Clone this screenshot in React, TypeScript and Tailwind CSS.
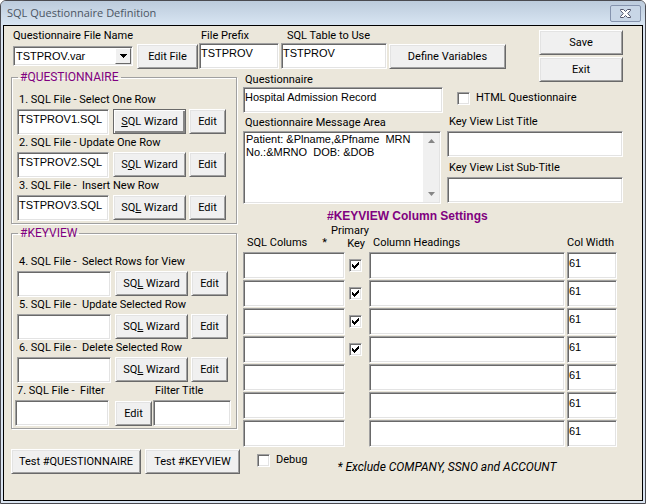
import { useState } from 'react';
import type { ComponentProps, ReactNode } from 'react';
import clsx from 'clsx';

const sunken =
  'border border-[#a0a0a0] border-r-white border-b-white bg-white shadow-[inset_1px_1px_0_#696969,inset_-1px_-1px_0_#e3e3e3]';

function Button({ className, focused, children, ...rest }: ComponentProps<'button'> & { focused?: boolean }) {
  return (
    <button
      type="button"
      className={clsx(
        'h-[25px] shrink-0 whitespace-nowrap border bg-[#f0f0f0] text-center',
        focused
          ? 'border-[#696969] shadow-[inset_1px_1px_0_#fff,inset_-2px_-2px_0_#868686]'
          : 'border-white border-r-[#696969] border-b-[#696969] shadow-[inset_1px_1px_0_#e3e3e3,inset_-1px_-1px_0_#a0a0a0]',
        className
      )}
      {...rest}
    >
      {children}
    </button>
  );
}

function TextBox({ className, tall, ...rest }: ComponentProps<'input'> & { tall?: boolean }) {
  return (
    <input
      type="text"
      className={clsx(
        sunken,
        'block min-w-0 px-px pb-[6px] font-[Liberation_Sans,sans-serif] outline-none',
        tall ? 'h-[27px]' : 'h-[26px]',
        className
      )}
      {...rest}
    />
  );
}

function CheckBox({ className, ...rest }: ComponentProps<'input'>) {
  return (
    <span className={clsx('relative block h-[13px] w-[13px] shrink-0', className)}>
      <input type="checkbox" className={clsx(sunken, 'peer block h-full w-full appearance-none')} {...rest} />
      <svg
        viewBox="0 0 13 13"
        className="pointer-events-none absolute inset-0 hidden h-full w-full peer-checked:block"
        shapeRendering="crispEdges"
      >
        <path d="M3 5h1v1h1v1h1v-1h1v-1h1v-1h1v-1h1v3h-1v1h-1v1h-1v1h-1v1h-1v-1h-1v-1h-1z" fill="#000" />
      </svg>
    </span>
  );
}

function Group({ title, children }: { title: string; children: ReactNode }) {
  return (
    <fieldset className="border border-[#a0a0a0] pb-[2px] shadow-[1px_1px_0_#fff,inset_1px_1px_0_#fff]">
      <legend className="ml-[6px] px-[2px] text-[12px] text-[#800080]">{title}</legend>
      {children}
    </fieldset>
  );
}

type SqlFileProps = { id: string; label: string; value?: string; accessKey?: 'S' | 'Q' | 'L'; focused?: boolean; wide?: boolean };

function SqlFile({ id, label, value, accessKey = 'L', focused, wide }: SqlFileProps) {
  return (
    <div>
      <label htmlFor={id} className="mb-[2px] ml-[2px] block whitespace-pre">
        {label}
      </label>
      <div className="flex">
        <TextBox id={id} defaultValue={value} className={wide ? 'w-[94px]' : 'w-[92px]'} />
        <Button focused={focused} className="ml-[4px] w-[73px]">
          {'SQL'.split('').map((c) => (c === accessKey ? <u key={c}>{c}</u> : c))} Wizard
        </Button>
        <Button className="ml-[3px] w-[37px]">Edit</Button>
      </div>
    </div>
  );
}

const rows = [true, true, true, true, false, false, false];

export default function App() {
  const [message, setMessage] = useState('Patient: &Plname,&Pfname  MRN\nNo.:&MRNO  DOB: &DOB');

  return (
    <div className="flex min-h-screen flex-col rounded-t-[6px] border border-[#4a4a50] bg-[#d9e4f1] px-[2px] pb-[2px] font-[Roboto,'Liberation_Sans',sans-serif] text-[11px] leading-[14px] text-black">
      <header className="-mx-[2px] flex h-[24px] items-center rounded-t-[5px] bg-linear-to-b from-[#bccbdc] to-[#d8e5f2] pl-[6px] pr-[4px]">
        <h1 className="font-['Open_Sans',sans-serif] text-[11px] text-[#4b5563]">SQL Questionnaire Definition</h1>
        <button
          type="button"
          aria-label="Close"
          className="ml-auto flex h-[17px] w-[31px] items-center justify-center rounded-[2px] border border-[#8593ad] bg-[#c8d6e6]"
        >
          <svg viewBox="0 0 13 11" className="h-[11px] w-[13px]">
            <path
              d="M1.5 1.5h3l2 2 2-2h3v1l-2.8 3 2.8 3v1h-3l-2-2-2 2h-3v-1l2.8-3-2.8-3z"
              fill="#fff"
              stroke="#50546a"
              strokeWidth="1"
            />
          </svg>
        </button>
      </header>

      <main className="flex-1 border border-black bg-[#ebe7db] pl-[7px] pr-[19px] pt-[3px]">
        <div className="flex items-start">
          <div className="ml-[2px] w-[120px] shrink-0">
            <label htmlFor="file-name" className="mb-[3px] block whitespace-nowrap">
              Questionnaire File Name
            </label>
            <div className="relative">
              <select
                id="file-name"
                className={clsx(sunken, 'block h-[20px] w-full appearance-none pl-[2px] font-[Liberation_Sans,sans-serif]')}
              >
                <option>TSTPROV.var</option>
              </select>
              <span className="pointer-events-none absolute bottom-[2px] right-[2px] top-[2px] flex w-[16px] items-center justify-center border border-white border-r-[#696969] border-b-[#696969] bg-[#f0f0f0]">
                <svg viewBox="0 0 7 4" className="h-[4px] w-[7px]" shapeRendering="crispEdges">
                  <path d="M0 0h7v1h-1v1h-1v1h-1v1h-1v-1h-1v-1h-1v-1h-1z" />
                </svg>
              </span>
            </div>
          </div>
          <Button className="ml-[4px] mt-[15px] w-[61px]">Edit File</Button>
          <div className="ml-[1px]">
            <label htmlFor="prefix" className="ml-[2px] block">
              File Prefix
            </label>
            <TextBox id="prefix" defaultValue="TSTPROV" className="w-[80px]" />
          </div>
          <div className="ml-[2px]">
            <label htmlFor="table" className="ml-[6px] block">
              SQL Table to Use
            </label>
            <TextBox id="table" defaultValue="TSTPROV" className="w-[106px]" />
          </div>
          <Button className="ml-[2px] mt-[15px] w-[117px]">Define Variables</Button>
          <div className="ml-auto mt-[1px] flex flex-col gap-[2px]">
            <Button className="w-[84px]">Save</Button>
            <Button className="w-[84px]">Exit</Button>
          </div>
        </div>

        <div className="-mt-[12px] flex">
          <div className="w-[226px] shrink-0">
            <Group title="#QUESTIONNAIRE">
              <div className="ml-[5px] mt-[9px] flex flex-col gap-[1px]">
                <SqlFile id="select-one" label="1. SQL File - Select One Row" value="TSTPROV1.SQL" accessKey="S" focused />
                <SqlFile id="update-one" label="2. SQL File - Update One Row" value="TSTPROV2.SQL" accessKey="Q" />
                <SqlFile id="insert-new" label="3. SQL File -  Insert New Row" value="TSTPROV3.SQL" />
              </div>
            </Group>
            <div className="h-[2px]" />
            <Group title="#KEYVIEW">
              <div className="ml-[5px] mt-[15px] flex flex-col gap-[1px]">
                <SqlFile id="select-rows" label="4. SQL File -  Select Rows for View" wide />
                <SqlFile id="update-row" label="5. SQL File -  Update Selected Row" wide />
                <SqlFile id="delete-row" label="6. SQL File -  Delete Selected Row" wide />
                <div className="-ml-[2px] flex items-end">
                  <div>
                    <label htmlFor="filter" className="mb-[2px] ml-[2px] block whitespace-pre">
                      7. SQL File -  Filter
                    </label>
                    <TextBox id="filter" className="w-[94px]" />
                  </div>
                  <Button className="ml-[6px] w-[37px]">Edit</Button>
                  <div className="ml-[1px]">
                    <label htmlFor="filter-title" className="mb-[2px] ml-[2px] block">
                      Filter Title
                    </label>
                    <TextBox id="filter-title" className="w-[78px]" />
                  </div>
                </div>
              </div>
            </Group>
            <div className="mt-[20px] flex gap-[4px]">
              <Button className="w-[130px]">Test #QUESTIONNAIRE</Button>
              <Button className="w-[95px]">Test #KEYVIEW</Button>
            </div>
          </div>

          <div className="ml-[6px] mt-[3px] min-w-0 flex-1">
            <div className="flex gap-[4px]">
              <div className="w-[200px] shrink-0">
                <label htmlFor="questionnaire" className="ml-[2px] block">
                  Questionnaire
                </label>
                <TextBox id="questionnaire" defaultValue="Hospital Admission Record" className="w-full" />
                <label htmlFor="message" className="mb-[1px] ml-[2px] mt-[3px] block">
                  Questionnaire Message Area
                </label>
                <div className={clsx(sunken, 'flex h-[73px] w-[198px] p-px')}>
                  <textarea
                    id="message"
                    value={message}
                    onChange={(e) => setMessage(e.target.value)}
                    className="min-w-0 flex-1 resize-none overflow-hidden pl-px font-[Liberation_Sans,sans-serif] leading-[13px] outline-none"
                  />
                  <div className="flex w-[16px] flex-col items-center justify-between bg-[#f0f0f0] py-[6px]">
                    <svg viewBox="0 0 7 4" className="h-[4px] w-[7px]">
                      <path d="M0 4l3.5-4L7 4z" fill="#868686" />
                    </svg>
                    <svg viewBox="0 0 7 4" className="h-[4px] w-[7px]">
                      <path d="M0 0l3.5 4L7 0z" fill="#868686" />
                    </svg>
                  </div>
                </div>
              </div>
              <div className="min-w-0 flex-1">
                <label className="ml-[10px] mt-[18px] flex items-center gap-[6px]">
                  <CheckBox />
                  HTML Questionnaire
                </label>
                <label htmlFor="list-title" className="mb-[2px] ml-[2px] mt-[10px] block">
                  Key View List Title
                </label>
                <TextBox id="list-title" className="w-full" />
                <label htmlFor="list-subtitle" className="mb-[2px] ml-[2px] mt-[4px] block">
                  Key View List Sub-Title
                </label>
                <TextBox id="list-subtitle" className="w-full" />
              </div>
            </div>

            <h2 className="ml-[84px] mt-[5px] font-[Liberation_Sans] text-[12px] font-bold text-[#800080]">#KEYVIEW Column Settings</h2>
            <div className="mt-[1px] pr-[6px]">
              <table className="w-full table-fixed border-collapse text-left">
                <colgroup>
                  <col className="w-[104px]" />
                  <col className="w-[22px]" />
                  <col />
                  <col className="w-[50px]" />
                </colgroup>
                <thead>
                  <tr className="align-bottom">
                    <th className="p-0 pb-[2px] pl-[4px] font-normal">
                      <span className="flex justify-between whitespace-nowrap pr-[20px]">
                        SQL Colums <span>*</span>
                      </span>
                    </th>
                    <th className="p-0 pb-[2px] font-normal">
                      <span className="flex flex-col items-end whitespace-nowrap leading-[13px]">
                        <span>Primary</span>
                        <span className="pr-[4px]">Key</span>
                      </span>
                    </th>
                    <th className="p-0 pb-[2px] pl-[4px] font-normal">Column Headings</th>
                    <th className="whitespace-nowrap p-0 pb-[2px] font-normal">Col Width</th>
                  </tr>
                </thead>
                <tbody>
                  {rows.map((primary, i) => (
                    <tr key={i} className="h-[28px] align-top">
                      <td className="p-0 pr-[2px]">
                        <TextBox tall aria-label={`SQL column ${i + 1}`} className="w-full" />
                      </td>
                      <td className="p-0 pl-[2px] pt-[7px]">
                        {primary && <CheckBox aria-label={`Primary key ${i + 1}`} defaultChecked />}
                      </td>
                      <td className="p-0 pr-[2px]">
                        <TextBox tall aria-label={`Column heading ${i + 1}`} className="w-full" />
                      </td>
                      <td className="p-0">
                        <TextBox tall aria-label={`Column width ${i + 1}`} defaultValue="61" className="w-full" />
                      </td>
                    </tr>
                  ))}
                </tbody>
              </table>
            </div>
            <div className="ml-[14px] mt-[5px] flex items-start">
              <label className="flex items-center gap-[6px]">
                <CheckBox />
                Debug
              </label>
              <em className="ml-[30px] mt-[7px] whitespace-nowrap text-[12px]">* Exclude COMPANY, SSNO and ACCOUNT</em>
            </div>
          </div>
        </div>
      </main>
    </div>
  );
}
